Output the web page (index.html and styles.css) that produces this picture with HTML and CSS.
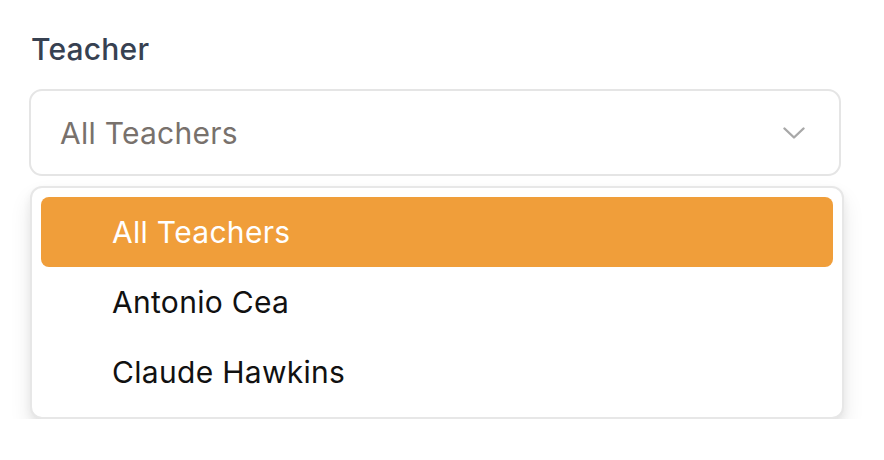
FILE: index.html
```html
<!DOCTYPE html>
<html>
<head>
<meta charset="utf-8">
<link rel="stylesheet" href="styles.css">
</head>
<body>
<div class="field">
  <label class="label">Teacher</label>
  <div class="select">
    <span class="placeholder">All Teachers</span>
    <svg class="chevron" width="22" height="12" viewBox="0 0 22 12"><path d="M1.5 1.5 L11 10.5 L20.5 1.5" fill="none" stroke="#a8a8a8" stroke-width="2.4" stroke-linecap="round" stroke-linejoin="round"/></svg>
  </div>
  <ul class="menu">
    <li class="item active">All Teachers</li>
    <li class="item">Antonio Cea</li>
    <li class="item">Claude Hawkins</li>
  </ul>
</div>
</body>
</html>
```

FILE: styles.css
```css
* { box-sizing: border-box; }
html, body { margin: 0; padding: 0; background: #ffffff; }
body {
  font-family: Inter, "Noto Sans", sans-serif;
  padding: 30px 40px 0 29px;
}
.field { width: 815px; display: flex; flex-direction: column; }
.label {
  font-size: 30px;
  font-weight: 500;
  letter-spacing: 0.2px;
  color: #374151;
  line-height: 38px;
  padding-left: 2px;
  margin-bottom: 21px;
}
.select {
  width: 812px;
  height: 87px;
  border: 2px solid #e5e5e5;
  border-radius: 13px;
  display: flex;
  align-items: center;
  justify-content: space-between;
  padding: 0 34px 0 29px;
}
.placeholder { font-size: 30px; letter-spacing: 0.25px; color: #78716c; }
.chevron { display: block; }
.menu {
  list-style: none;
  margin: 10px 0 0 1px;
  padding: 9px 9px 10px;
  width: 814px;
  border: 2px solid #e7e7e7;
  border-radius: 12px;
  box-shadow: 0 12px 22px rgba(0,0,0,0.09), 0 4px 8px rgba(0,0,0,0.06);
  background: #fff;
}
.item {
  height: 70px;
  display: flex;
  align-items: center;
  padding-left: 71px;
  font-size: 30px;
  letter-spacing: 0.3px;
  color: #111111;
  border-radius: 8px;
}
.item.active { background: #f09e3a; color: #ffffff; }
```
